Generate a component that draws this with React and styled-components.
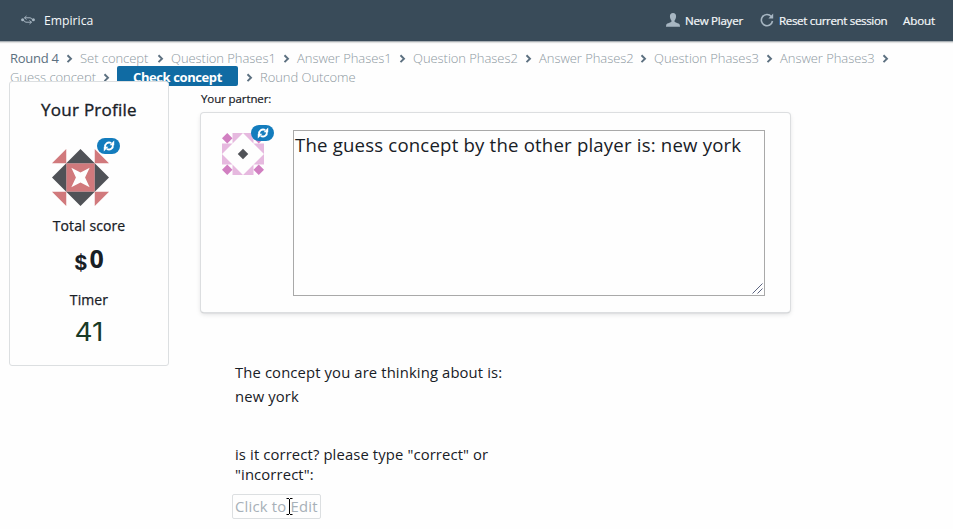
import React from "react";
import styled, { createGlobalStyle } from "styled-components";

const Global = createGlobalStyle`
  * { box-sizing: border-box; }
  html, body { margin: 0; height: 529px; overflow: hidden; background: #fefefe; }
  body { font-family: "Open Sans", "Noto Sans", sans-serif; color: #182026; }
`;

const Header = styled.header`
  display: flex;
  align-items: center;
  height: 41px;
  padding: 0 17px 1px 21px;
  background: #394b59;
  color: #f5f8fa;
  font-size: 11.6px;
  white-space: nowrap;
  box-shadow: 0 1px 0 #a9b0b5, 0 2px 1px rgba(16, 22, 26, 0.12);
`;
const Brand = styled.div`
  display: flex;
  align-items: center;
  gap: 9px;
  margin-right: auto;
  font-size: 12.2px;
`;
const NavItem = styled.div`
  display: flex;
  align-items: center;
  gap: 5px;
  width: ${(p) => p.$w}px;
  letter-spacing: ${(p) => p.$ls || 0}px;
  -webkit-text-stroke: 0.2px currentColor;
  svg { flex: none; }
`;

const Crumbs = styled.nav`
  padding: 8px 9px 0;
`;
const CrumbRow = styled.div`
  display: flex;
  align-items: center;
  height: 19px;
`;
const Crumb = styled.span`
  width: ${(p) => p.$w}px;
  margin-left: ${(p) => (p.$first ? 1 : 0)}px;
  font-size: 13px;
  font-weight: ${(p) => (p.$dark ? 400 : 300)};
  letter-spacing: ${(p) => (p.$dark ? -0.25 : -0.05)}px;
  line-height: 19px;
  white-space: nowrap;
  color: ${(p) => (p.$dark ? "#5c7080" : "#8d989f")};
`;
const CurrentCrumb = styled.span`
  width: 121px;
  height: 20px;
  margin-top: -3px;
  padding-left: 16px;
  border-radius: 2px;
  background: #106ba3;
  color: #fff;
  font-size: 13px;
  font-weight: 700;
  line-height: 22px;
  letter-spacing: -0.4px;
  white-space: nowrap;
`;
const Separator = styled.span`
  display: flex;
  justify-content: center;
  width: 22px;
  flex: none;
`;

const Main = styled.main`
  display: flex;
  align-items: flex-start;
  margin-top: -6px;
  padding-left: 9px;
`;
const Profile = styled.aside`
  position: relative;
  display: flex;
  flex-direction: column;
  align-items: center;
  width: 160px;
  height: 285px;
  border: 1px solid #dcdfe1;
  border-radius: 3px;
  background: #fefefe;
`;
const ProfileTitle = styled.h3`
  margin: 15px 0 0;
  font-size: 17px;
  font-weight: 400;
  line-height: 26px;
  letter-spacing: 0.25px;
  -webkit-text-stroke: 0.35px currentColor;
`;
const AvatarBox = styled.div`
  position: relative;
  width: ${(p) => p.$size}px;
  height: ${(p) => p.$size}px;
  flex: none;
  svg { display: block; }
`;
const ProfileAvatar = styled(AvatarBox)`
  margin: 26px 17px 0 0;
`;
const Badge = styled.span`
  position: absolute;
  left: ${(p) => p.$x}px;
  top: ${(p) => p.$y}px;
  display: flex;
  align-items: center;
  justify-content: center;
  width: 23px;
  height: 16px;
  border-radius: 8px;
  background: #137cbd;
  color: #fff;
`;
const StatLabel = styled.div`
  margin-top: ${(p) => p.$mt}px;
  font-size: 14px;
  line-height: 20px;
  letter-spacing: 0.1px;
  -webkit-text-stroke: 0.25px currentColor;
`;
const Score = styled.div`
  display: flex;
  align-items: baseline;
  gap: 2px;
  height: 30px;
  margin-top: 7px;
  font-size: 25px;
  font-weight: 700;
  line-height: 30px;
`;
const Currency = styled.span`
  font-family: Inter, sans-serif;
  font-size: 20px;
  font-weight: 700;
  transform: translateY(2px);
`;
const Timer = styled.div`
  margin-top: 7px;
  font-family: Inter, sans-serif;
  font-size: 25px;
  font-weight: 400;
  line-height: 30px;
  color: #183a26;
  transform: scaleX(1.12);
`;

const Content = styled.section`
  width: 590px;
  margin-left: 32px;
  padding-top: 9px;
`;
const PartnerLabel = styled.div`
  height: 23px;
  font-size: 11.5px;
  line-height: 18px;
  letter-spacing: -0.1px;
  -webkit-text-stroke: 0.2px currentColor;
`;
const PartnerCard = styled.div`
  display: flex;
  width: 589px;
  height: 199px;
  padding: 17px 0 0 21px;
  border-radius: 3px;
  background: #fefefe;
  box-shadow: 0 0 0 1px #dcdee0, 0 1px 1px rgba(16, 22, 26, 0.4), 0 2px 5px rgba(16, 22, 26, 0.15);
`;
const PartnerAvatar = styled(AvatarBox)`
  margin: 3px 29px 0 0;
`;
const Message = styled.div`
  position: relative;
  width: 472px;
  height: 166px;
  border: 1px solid #a9a9a9;
  padding: 0 1px;
  font-size: 18.6px;
  line-height: 28px;
  letter-spacing: 0.19px;
  white-space: nowrap;
`;
const Grip = styled.svg`
  position: absolute;
  right: 1px;
  bottom: 1px;
`;
const Prompt = styled.div`
  margin: 48px 0 0 34px;
  font-size: 14.8px;
  line-height: 24px;
  letter-spacing: 0.13px;
`;
const Question = styled.p`
  margin: 36px 0 0;
  line-height: 20px;
`;
const Editable = styled.div`
  position: relative;
  width: 89px;
  height: 25px;
  margin: 10px 0 0 -3px;
  border: 1px solid #dcdfe1;
  border-radius: 2px;
  padding-left: 2px;
  color: #a7b0b8;
  line-height: 23px;
  letter-spacing: 0.22px;
  white-space: nowrap;
`;
const Caret = styled.svg`
  position: absolute;
  left: 53px;
  top: 3px;
`;

const Chevron = () => (
  <Separator>
    <svg width="8" height="10" viewBox="0 0 8 10" fill="none">
      <path d="M2.500 1.300 6 4.700 2.500 8.100" stroke="#5c7080" strokeWidth="1.9" />
    </svg>
  </Separator>
);

const row1 = [
  ["Round 4", 48, true],
  ["Set concept", 69],
  ["Question Phases1", 104],
  ["Answer Phases1", 94],
  ["Question Phases2", 104],
  ["Answer Phases2", 93],
  ["Question Phases3", 104],
  ["Answer Phases3", 94],
];

const RefreshBadge = ({ x, y }) => (
  <Badge $x={x} $y={y}>
    <svg width="12" height="12" viewBox="0 0 12 12" fill="none" stroke="currentColor" strokeWidth="1.900">
      <path d="M2.200 7.200C1.600 3.800 4.800 1.300 8.300 3M9.800 4.800C10.400 8.200 7.200 10.700 3.700 9" />
      <path d="M11.200.6v4.600H6.600ZM.8 11.400V6.800h4.600Z" fill="currentColor" stroke="none" />
    </svg>
  </Badge>
);

export default function App() {
  return (
    <>
      <Global />
      <Header>
        <Brand>
          <svg width="14" height="10" viewBox="0 0 14 10" fill="none" stroke="#a7b6c2">
            <path d="M5.500 1 3.500 2.800l2 1.700M3.500 2.800H9q2 .2 2.400 2M8.500 5.500l2 1.700-2 1.800M10.500 7.200H5Q3 7 2.600 5" />
            <circle cx="1.6" cy="4.8" r="1.5" fill="#a7b6c2" stroke="none" />
            <circle cx="12.4" cy="4.8" r="1.5" fill="#a7b6c2" stroke="none" />
          </svg>
          Empirica
        </Brand>
        <NavItem $w={94} $ls={-0.28}>
          <svg width="14" height="14" viewBox="0 0 16 16" fill="#a7b6c2">
            <path d="M8 0C5.700 0 4.300 1.700 4.500 4c.1 2 .8 3.500 1.700 4.500V10c-.3.900-5 1.500-5.800 3.100C.1 13.800 0 15 0 15.600h16c0-.6-.1-1.800-.4-2.500C14.800 11.500 10.100 10.900 9.800 10V8.500c.9-1 1.600-2.500 1.700-4.500C11.700 1.700 10.300 0 8 0Z" />
          </svg>
          New Player
        </NavItem>
        <NavItem $w={143} $ls={-0.36}>
          <svg width="14" height="14" viewBox="0 0 14 14" fill="none">
            <path d="M11.300 3.500A5.600 5.600 0 1 0 12.500 8" stroke="#a7b6c2" strokeWidth="1.600" />
            <path d="M13.200.5v4.900H8.400Z" fill="#a7b6c2" />
          </svg>
          Reset current session
        </NavItem>
        <NavItem $w={33} $ls={-0.1}>About</NavItem>
      </Header>
      <Crumbs>
        <CrumbRow>
          {row1.map(([label, w, dark], i) => (
            <React.Fragment key={label}>
              <Crumb $w={w} $dark={dark} $first={i === 0}>{label}</Crumb>
              <Chevron />
            </React.Fragment>
          ))}
        </CrumbRow>
        <CrumbRow>
          <Crumb $w={85} $first>Guess concept</Crumb>
          <Chevron />
          <CurrentCrumb>Check concept</CurrentCrumb>
          <Chevron />
          <Crumb $w={96}>Round Outcome</Crumb>
        </CrumbRow>
      </Crumbs>
      <Main>
        <Profile>
          <ProfileTitle>Your Profile</ProfileTitle>
          <ProfileAvatar $size={57}>
            <svg width="57" height="57" viewBox="0 0 56 56">
              <path fill="#d1797c" d="M14 0v14H0ZM42 0v14h14ZM0 42h14v14ZM56 42H42v14ZM14 14h28v28H14Z" />
              <path fill="#505257" d="M28 0 42 14H14ZM56 28 42 42V14ZM28 56 14 42h28ZM0 28 14 14v28Z" />
              <path fill="#fefefe" d="M19 18.500 28 23l9-4.500L32.500 28l4.500 9.500L28 33l-9 4.500L23.500 28Z" />
            </svg>
            <RefreshBadge x={45} y={-11} />
          </ProfileAvatar>
          <StatLabel $mt={10}>Total score</StatLabel>
          <Score><Currency>$</Currency>0</Score>
          <StatLabel $mt={17}>Timer</StatLabel>
          <Timer>41</Timer>
        </Profile>
        <Content>
          <PartnerLabel>Your partner:</PartnerLabel>
          <PartnerCard>
            <PartnerAvatar $size={42}>
              <svg width="42" height="42" viewBox="0 0 40 40">
                <path fill="#e6b9df" d="M10 0h10L10 10ZM20 0h10v10ZM0 10h10L0 20ZM0 20l10 10H0ZM40 10H30l10 10ZM40 20 30 30h10ZM10 30l10 10H10ZM30 30v10H20Z" />
                <path fill="#d17fc1" d="m5 0 5 5-5 5-5-5ZM35 0l5 5-5 5-5-5ZM5 30l5 5-5 5-5-5ZM35 30l5 5-5 5-5-5Z" />
                <path fill="#505257" d="m20 15 5 5-5 5-5-5Z" />
              </svg>
              <RefreshBadge x={29} y={-8} />
            </PartnerAvatar>
            <Message>
              The guess concept by the other player is: new york
              <Grip width="11" height="11" viewBox="0 0 11 11" stroke="#5c6480" fill="none">
                <path d="M.5 10.500l10-10M5.500 10.500l5-5" />
              </Grip>
            </Message>
          </PartnerCard>
          <Prompt>
            The concept you are thinking about is:<br />
            new york
            <Question>
              is it correct? please type "correct" or<br />
              "incorrect":
            </Question>
            <Editable>
              Click to Edit
              <Caret width="7" height="17" viewBox="0 0 7 17" stroke="#000" fill="none">
                <path d="M.5.5H3M4 .5h2.500M3.500 1v15M.5 16.500H3M4 16.500h2.500" />
              </Caret>
            </Editable>
          </Prompt>
        </Content>
      </Main>
    </>
  );
}
